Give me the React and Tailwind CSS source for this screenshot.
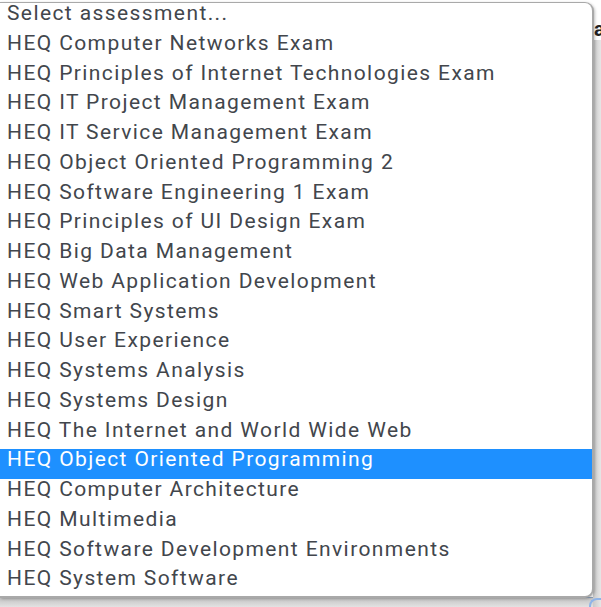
import React from "react";

const assessments = [
  "Select assessment...",
  "HEQ Computer Networks Exam",
  "HEQ Principles of Internet Technologies Exam",
  "HEQ IT Project Management Exam",
  "HEQ IT Service Management Exam",
  "HEQ Object Oriented Programming 2",
  "HEQ Software Engineering 1 Exam",
  "HEQ Principles of UI Design Exam",
  "HEQ Big Data Management",
  "HEQ Web Application Development",
  "HEQ Smart Systems",
  "HEQ User Experience",
  "HEQ Systems Analysis",
  "HEQ Systems Design",
  "HEQ The Internet and World Wide Web",
  "HEQ Object Oriented Programming",
  "HEQ Computer Architecture",
  "HEQ Multimedia",
  "HEQ Software Development Environments",
  "HEQ System Software",
];

const selected = "HEQ Object Oriented Programming";

export default function App() {
  return (
    <div className="relative h-[607px] w-[601px] overflow-hidden bg-white font-['Roboto',sans-serif]">
      {/* page underneath the open list */}
      <div className="pt-[14px] pl-[594px] text-[20px] font-bold text-[#222]">a</div>
      <div className="absolute left-0 right-0 bottom-0 h-[10px] border-t border-[#8fa3bd] bg-gradient-to-b from-[#c4c4c4] to-[#e2e2e2]" />
      <div className="absolute top-[40px] bottom-0 right-0 w-[8px] bg-gradient-to-r from-[#c9c9c9] to-[#e6e6e6]" />
      <div className="absolute right-0 bottom-0 h-[9px] w-[12px] rounded-tl-lg border-l-2 border-t-2 border-[#8fb4e8]" />
      <div className="absolute right-[7px] top-[441px] h-[56px] w-[2px] rounded bg-[#3f7f5a]" />

      {/* open select list */}
      <ul className="absolute left-0 top-[2px] w-[594px] h-[596px] overflow-hidden rounded-r-[9px] border-t border-r-2 border-b-2 border-[#a9a9a9] bg-white shadow-[1px_1px_3px_rgba(0,0,0,0.25)]">
        {assessments.map((name) => (
          <li
            key={name}
            className={`flex h-[29.75px] items-center pb-[8px] pl-[7px] text-[21px] tracking-[1.4px] whitespace-nowrap ${
              name === selected ? "bg-[#1e90ff] text-white" : "text-[#42464c]"
            }`}
          >
            {name}
          </li>
        ))}
      </ul>
    </div>
  );
}
